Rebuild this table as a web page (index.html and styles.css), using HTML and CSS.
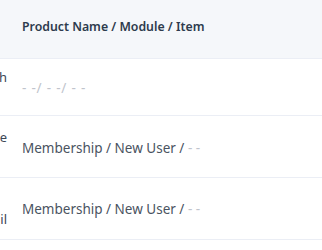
FILE: index.html
```html
<!DOCTYPE html>
<html>
<head>
<meta charset="utf-8">
<link rel="stylesheet" href="styles.css">
</head>
<body>
<table class="grid">
  <thead>
    <tr class="head-row">
      <th class="cut"></th>
      <th class="col">Product Name / Module / Item</th>
    </tr>
  </thead>
  <tbody>
    <tr class="row r1">
      <td class="cut"><div class="clip"><div class="lines"><div class="ln">Billing by Month</div><div class="ln hide">Cycle</div></div></div></td>
      <td class="col"><span class="muted spaced">- -/ - -/ - -</span></td>
    </tr>
    <tr class="row r2">
      <td class="cut"><div class="clip"><div class="lines"><div class="ln">New User Free</div><div class="ln hide">Trial</div></div></div></td>
      <td class="col">Membership / New User / <span class="muted">- -</span></td>
    </tr>
    <tr class="row r3">
      <td class="cut"><div class="clip"><div class="lines"><div class="ln hide">Membership</div><div class="ln">Detail</div></div></div></td>
      <td class="col">Membership / New User / <span class="muted">- -</span></td>
    </tr>
  </tbody>
</table>
</body>
</html>
```
FILE: styles.css
```css
html, body {
  margin: 0;
  padding: 0;
  background: #ffffff;
}
body {
  font-family: "Noto Sans", "Open Sans", sans-serif;
  font-size: 13.5px;
  color: #4a5361;
}
.grid {
  border-collapse: collapse;
  width: 100%;
  table-layout: fixed;
}
.cut {
  width: 8px;
  padding: 0;
  overflow: hidden;
}
.head-row th {
  background: #f5f7fa;
  height: 52px;
  padding: 0 0 6px 0;
  border-bottom: 1px solid #ebeef5;
  text-align: left;
  vertical-align: middle;
}
.head-row .col {
  padding-left: 14px;
  font-size: 12.3px;
  font-weight: 600;
  color: #2d3b4d;
}
.row td {
  border-bottom: 1px solid #ebeef5;
  vertical-align: middle;
  padding: 0;
}
.row .col {
  padding-left: 14px;
  line-height: 20px;
}
.r1 td { height: 54px; padding-top: 2px; }
.r2 td { height: 58px; padding-top: 3px; }
.r3 td { height: 61px; }
.r1 .cut, .r2 .cut { height: auto; padding-top: 0; }
.clip {
  width: 8px;
  overflow: hidden;
}
.lines {
  width: 120px;
  margin-left: -113px;
  line-height: 20px;
  font-size: 13px;
  color: #3c4656;
}
.ln {
  text-align: right;
  white-space: nowrap;
}
.ln.hide {
  padding-right: 40px;
}
.muted {
  color: #c0c4cc;
}
.spaced {
  letter-spacing: 0.8px;
}
```
